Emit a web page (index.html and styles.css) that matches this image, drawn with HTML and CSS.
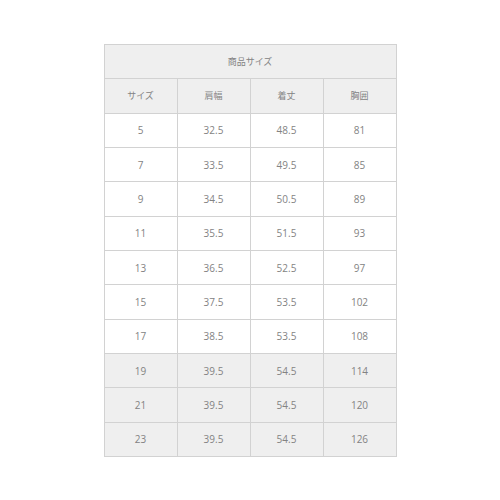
FILE: index.html
```html
<!DOCTYPE html>
<html lang="ja">
<head>
<meta charset="utf-8">
<link rel="stylesheet" href="styles.css">
</head>
<body>
<table class="size-table">
  <tr class="shade"><th colspan="4">商品サイズ</th></tr>
  <tr class="shade"><th>サイズ</th><th>肩幅</th><th>着丈</th><th>胸囲</th></tr>
  <tr><td>5</td><td>32.5</td><td>48.5</td><td>81</td></tr>
  <tr><td>7</td><td>33.5</td><td>49.5</td><td>85</td></tr>
  <tr><td>9</td><td>34.5</td><td>50.5</td><td>89</td></tr>
  <tr><td>11</td><td>35.5</td><td>51.5</td><td>93</td></tr>
  <tr><td>13</td><td>36.5</td><td>52.5</td><td>97</td></tr>
  <tr><td>15</td><td>37.5</td><td>53.5</td><td>102</td></tr>
  <tr><td>17</td><td>38.5</td><td>53.5</td><td>108</td></tr>
  <tr class="shade"><td>19</td><td>39.5</td><td>54.5</td><td>114</td></tr>
  <tr class="shade"><td>21</td><td>39.5</td><td>54.5</td><td>120</td></tr>
  <tr class="shade"><td>23</td><td>39.5</td><td>54.5</td><td>126</td></tr>
</table>
</body>
</html>
```
FILE: styles.css
```css
html, body {
  margin: 0;
  background: #ffffff;
}
body {
  padding-top: 44px;
  font-family: "Open Sans", "Noto Sans CJK JP", sans-serif;
}
.size-table {
  border-collapse: collapse;
  margin: 0 auto;
  width: 293px;
  height: 412px;
  table-layout: fixed;
  color: #838383;
  font-size: 10px;
}
.size-table th,
.size-table td {
  border: 1px solid #d2d2d2;
  text-align: center;
  vertical-align: middle;
  font-weight: normal;
  padding: 0;
}
.size-table th {
  font-size: 9px;
}
.size-table tr {
  height: 34.33px;
}
.shade {
  background: #efefef;
}
```
